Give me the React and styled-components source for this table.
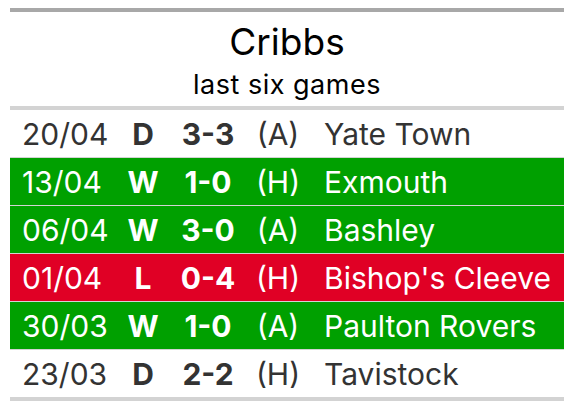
import React from "react";
import styled, { createGlobalStyle } from "styled-components";

const games = [
  { date: "20/04", res: "D", score: "3-3", venue: "(A)", team: "Yate Town" },
  { date: "13/04", res: "W", score: "1-0", venue: "(H)", team: "Exmouth" },
  { date: "06/04", res: "W", score: "3-0", venue: "(A)", team: "Bashley" },
  { date: "01/04", res: "L", score: "0-4", venue: "(H)", team: "Bishop's Cleeve" },
  { date: "30/03", res: "W", score: "1-0", venue: "(A)", team: "Paulton Rovers" },
  { date: "23/03", res: "D", score: "2-2", venue: "(H)", team: "Tavistock" },
];

const rowColours = {
  W: { bg: "#00a000", fg: "#ffffff" },
  L: { bg: "#e00025", fg: "#ffffff" },
  D: { bg: "#ffffff", fg: "#333333" },
};

const GlobalStyle = createGlobalStyle`
  body {
    margin: 0;
    padding: 8px 8px 8px 10px;
    background: #ffffff;
    font-family: Inter, "Noto Sans", sans-serif;
  }
`;

const Table = styled.div`
  width: 554px;
  border-top: 4px solid #a8a8a8;
  border-bottom: 4px solid #d3d3d3;
`;

const Header = styled.div`
  display: flex;
  flex-direction: column;
  align-items: center;
  padding: 8px 0 4px;
  border-bottom: 4px solid #d3d3d3;
  color: #000000;
`;

const Title = styled.div`
  font-size: 37px;
  line-height: 44px;
  margin-bottom: 4px;
`;

const Subtitle = styled.div`
  font-size: 27px;
  line-height: 34px;
  letter-spacing: 0.5px;
`;

const Row = styled.div`
  display: grid;
  grid-template-columns: 108px 50px 80px 60px 1fr;
  align-items: center;
  height: 47px;
  background: ${(p) => p.$bg};
  color: ${(p) => p.$fg};
  font-size: 30px;
  & + & {
    border-top: 1px solid #d3d3d3;
  }
`;

const DateCell = styled.div`
  padding-left: 12px;
`;

const Bold = styled.div`
  font-weight: 700;
  text-align: center;
`;

const Venue = styled.div`
  text-align: center;
`;

const Team = styled.div`
  padding-left: 16px;
  white-space: nowrap;
`;

export default function App() {
  return (
    <>
      <GlobalStyle />
      <Table>
        <Header>
          <Title>Cribbs</Title>
          <Subtitle>last six games</Subtitle>
        </Header>
        {games.map((g) => (
          <Row key={g.date} $bg={rowColours[g.res].bg} $fg={rowColours[g.res].fg}>
            <DateCell>{g.date}</DateCell>
            <Bold>{g.res}</Bold>
            <Bold>{g.score}</Bold>
            <Venue>{g.venue}</Venue>
            <Team>{g.team}</Team>
          </Row>
        ))}
      </Table>
    </>
  );
}
